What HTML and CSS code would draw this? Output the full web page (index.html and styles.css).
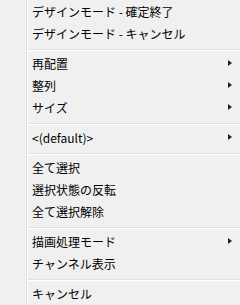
FILE: index.html
```html
<!DOCTYPE html>
<html lang="ja">
<head>
<meta charset="utf-8">
<link rel="stylesheet" href="styles.css">
</head>
<body>
<div class="menu">
  <div class="item">デザインモード - 確定終了</div>
  <div class="item">デザインモード - キャンセル</div>
  <div class="sep"></div>
  <div class="item sub">再配置</div>
  <div class="item sub">整列</div>
  <div class="item sub">サイズ</div>
  <div class="sep"></div>
  <div class="item sub">&lt;(default)&gt;</div>
  <div class="sep"></div>
  <div class="item">全て選択</div>
  <div class="item">選択状態の反転</div>
  <div class="item">全て選択解除</div>
  <div class="sep"></div>
  <div class="item sub">描画処理モード</div>
  <div class="item">チャンネル表示</div>
  <div class="sep"></div>
  <div class="item">キャンセル</div>
</div>
</body>
</html>
```
FILE: styles.css
```css
html, body {
  margin: 0;
  padding: 0;
  background: #f0f0f0;
}
.menu {
  width: 240px;
  height: 305px;
  padding-top: 1px;
  box-sizing: border-box;
  overflow: hidden;
  background: linear-gradient(to right, #f0f0f0 0 26px, #e0e0e0 26px 27px, #ffffff 27px 28px, #f0f0f0 28px);
  font-family: "Noto Sans CJK JP", "Noto Sans", sans-serif;
  font-size: 12px;
  color: #000;
}
.item {
  position: relative;
  height: 22px;
  box-sizing: border-box;
  display: flex;
  align-items: center;
  padding-left: 32px;
  padding-bottom: 2px;
  white-space: nowrap;
}
.sub::after {
  content: "";
  position: absolute;
  left: 228px;
  top: 7px;
  width: 0;
  height: 0;
  border-top: 3.5px solid transparent;
  border-bottom: 3.5px solid transparent;
  border-left: 4px solid #222;
}
.sep {
  height: 8px;
  margin-left: 28px;
  box-sizing: border-box;
  padding-top: 4px;
}
.sep::before {
  content: "";
  display: block;
  height: 1px;
  background: #e0e0e0;
  border-bottom: 1px solid #fff;
}
```
